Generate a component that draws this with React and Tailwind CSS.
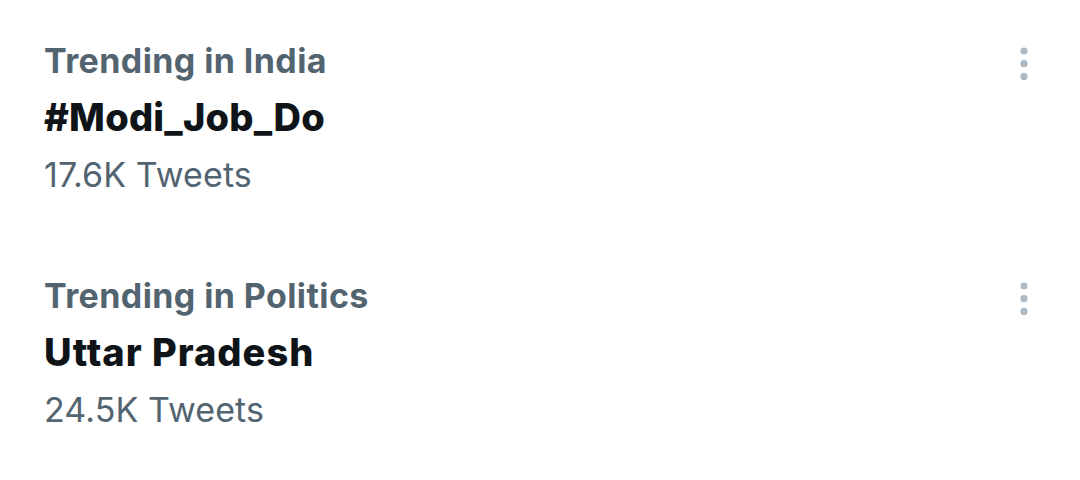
import React from "react";

const items = [
  { label: "Trending in India", title: "#Modi_Job_Do", count: "17.6K Tweets", tt: "tracking-[0.2px]" },
  { label: "Trending in Politics", title: "Uttar Pradesh", count: "24.5K Tweets", tt: "tracking-[1px]" },
];

function Dots() {
  return (
    <svg width="14" height="40" viewBox="0 0 14 40" className="shrink-0">
      <circle cx="7" cy="7" r="3.6" fill="#aebbc5" />
      <circle cx="7" cy="19.7" r="3.6" fill="#aebbc5" />
      <circle cx="7" cy="32.4" r="3.6" fill="#aebbc5" />
    </svg>
  );
}

export default function App() {
  return (
    <div
      className="w-[1080px] h-[480px] overflow-hidden bg-white flex flex-col pt-[32px] pl-[44px] pr-[49px]"
      style={{ fontFamily: "Inter, Roboto, 'Liberation Sans', sans-serif" }}
    >
      {items.map((it, i) => (
        <div key={i} className="flex justify-between h-[235px] shrink-0">
          <div className="flex flex-col">
            <div className="text-[34px] leading-[57px] font-bold text-[#536471] tracking-[0.4px]">{it.label}</div>
            <div className={`text-[38px] leading-[57px] font-extrabold text-[#0f1419] ${it.tt}`}>{it.title}</div>
            <div className="text-[34px] leading-[57px] text-[#536471] tracking-[0.1px]">{it.count}</div>
          </div>
          <div className="pt-[12px]">
            <Dots />
          </div>
        </div>
      ))}
    </div>
  );
}
